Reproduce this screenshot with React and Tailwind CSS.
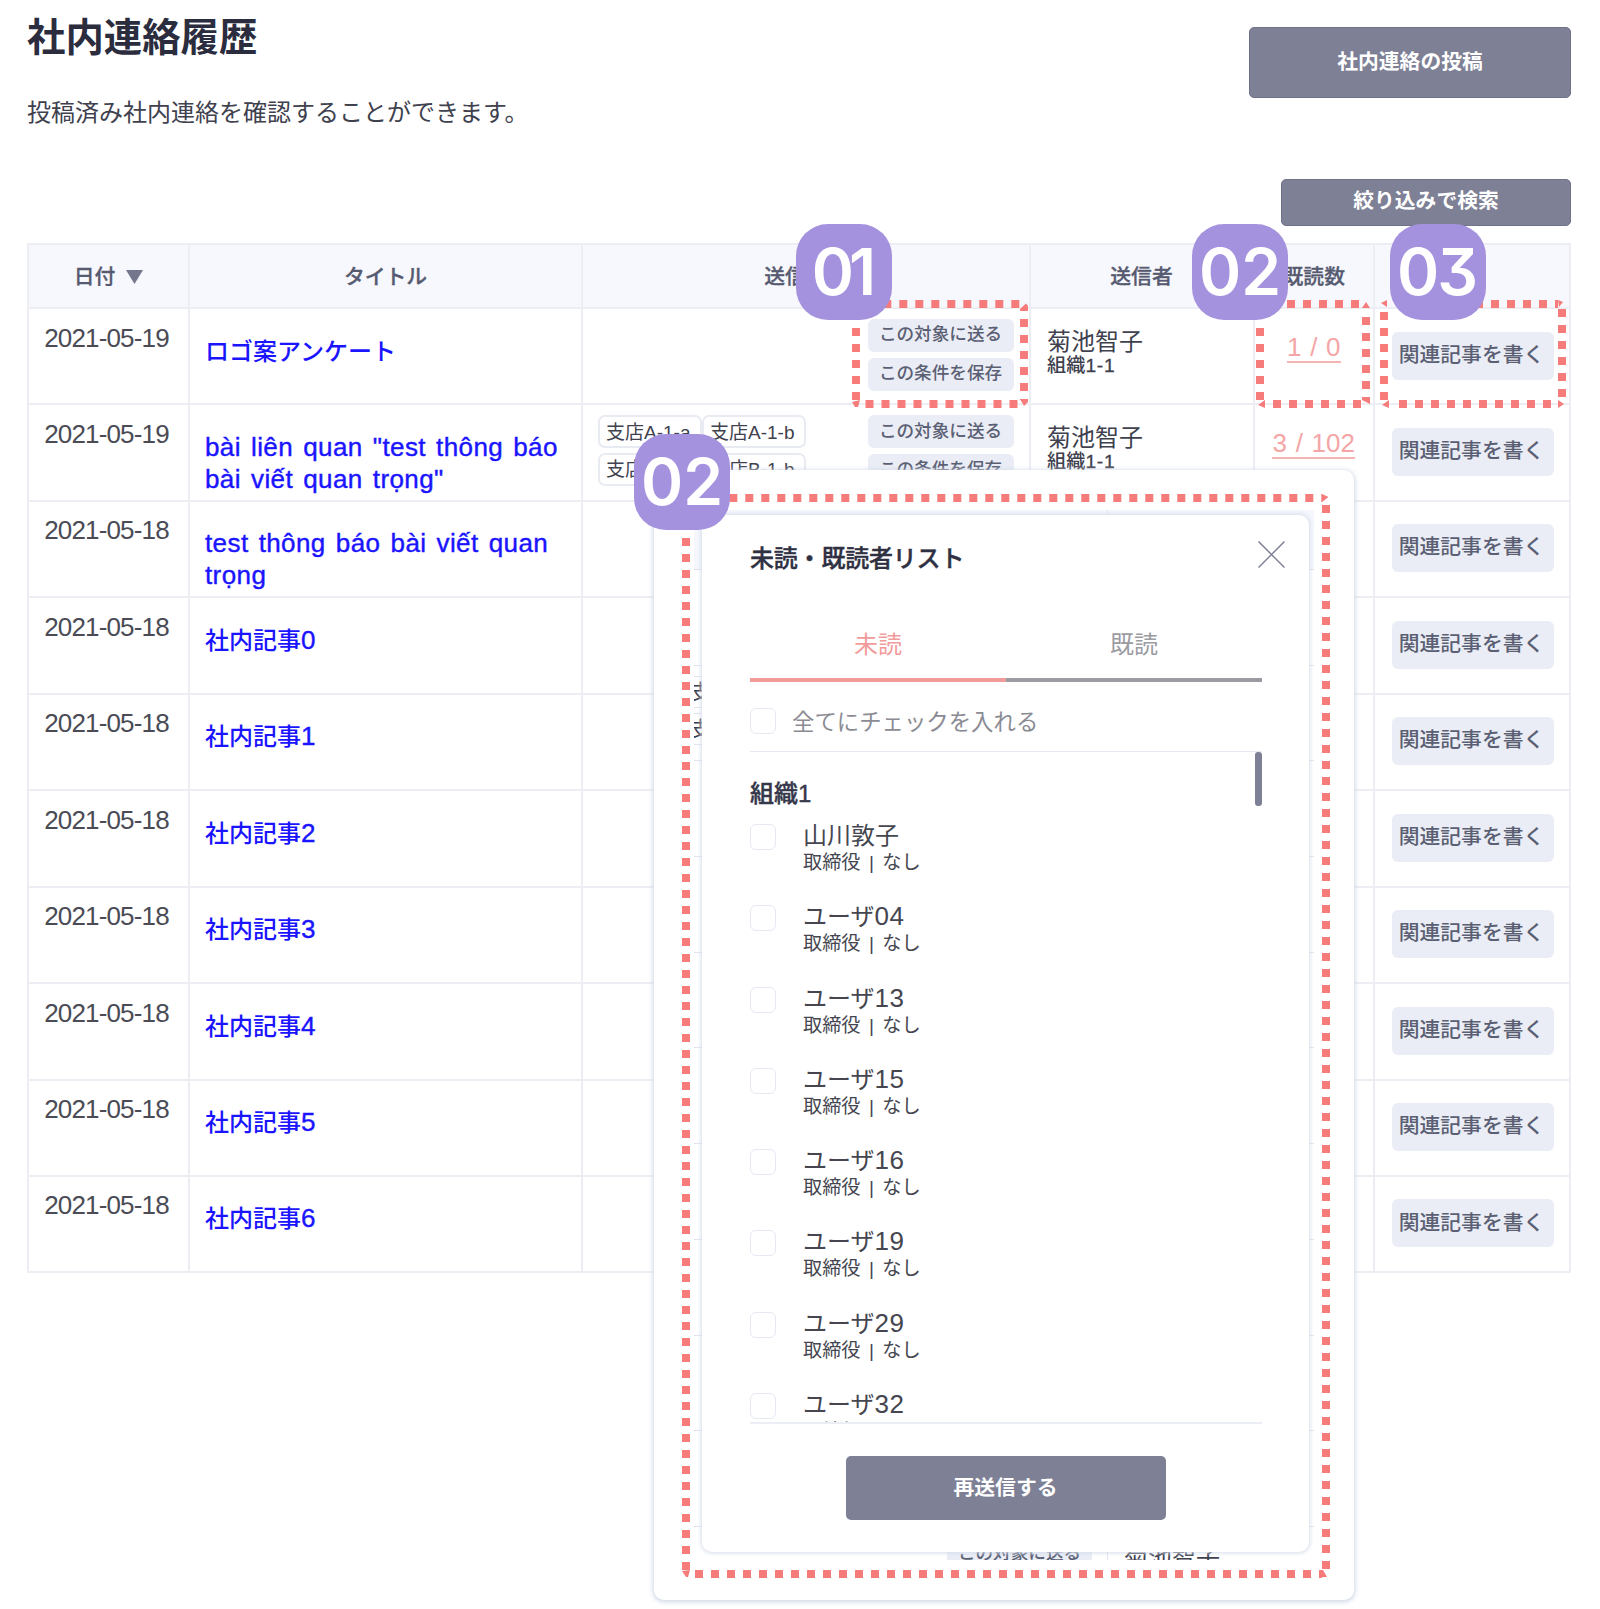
import React from "react";

const FONT = "font-['Liberation_Sans','Noto_Sans_CJK_JP',sans-serif]";
const COLS = "grid grid-cols-[161px_393px_447.5px_224px_120.5px_196px]";
const CORAL = "#f67b7b";

const rows = [
  { date: "2021-05-19", title: "ロゴ案アンケート", sender: true, read: "1 / 0" },
  {
    date: "2021-05-19",
    title: 'bài liên quan "test thông báo bài viết quan trọng"',
    sender: true,
    read: "3 / 102",
    tags: ["支店A-1-a", "支店A-1-b", "支店B-1-a", "支店B-1-b"],
  },
  { date: "2021-05-18", title: "test thông báo bài viết quan trọng" },
  { date: "2021-05-18", title: "社内記事0" },
  { date: "2021-05-18", title: "社内記事1" },
  { date: "2021-05-18", title: "社内記事2" },
  { date: "2021-05-18", title: "社内記事3" },
  { date: "2021-05-18", title: "社内記事4" },
  { date: "2021-05-18", title: "社内記事5" },
  { date: "2021-05-18", title: "社内記事6" },
];

const users = ["山川敦子", "ユーザ04", "ユーザ13", "ユーザ15", "ユーザ16", "ユーザ19", "ユーザ29", "ユーザ32"];

/* Sets the Latin and digit runs slightly larger than the Japanese ones. */
function Mixed({ text, className = "" }) {
  return text
    .split(/([^\u3000-\u9fff]+)/)
    .filter(Boolean)
    .map((part, i) =>
      /[\u3000-\u9fff]/.test(part) ? part : (
        <span key={i} className={`text-[26px] leading-none tracking-[0.4px] ${className}`}>
          {part}
        </span>
      )
    );
}

function Head({ children }) {
  return (
    <div className="flex items-center justify-center border-r-2 border-b-2 border-[#eceef4] bg-[#f7f8fd] pt-[1px] text-[20.8px] font-medium text-[#565a70] [-webkit-text-stroke:0.3px]">
      {children}
    </div>
  );
}

function Cell({ className = "", children }) {
  return <div className={`min-w-0 overflow-hidden border-r-2 border-b-2 border-[#eceef4] ${className}`}>{children}</div>;
}

function SmallButton({ children }) {
  return (
    <div className="flex h-[33px] w-[146px] items-center justify-center rounded-[6px] bg-[#eaedf5] pb-[1px] text-[17.6px] leading-none font-medium text-[#5b5f74]">
      {children}
    </div>
  );
}

function Row({ row }) {
  return (
    <div className={`${COLS} h-[96.45px]`}>
      <Cell className="pt-[12.5px] pr-[4px] text-center text-[26px] leading-[32px] tracking-[-0.85px] text-[#4a4b55]">{row.date}</Cell>
      <Cell className="pt-[26.5px] pr-[6px] pl-[15px] text-[24px] leading-[32px] font-medium text-[#1a14ff] [word-spacing:2.5px]">
        <Mixed text={row.title} className="[-webkit-text-stroke:0.4px]" />
      </Cell>
      <Cell className="flex justify-between pt-[10px] pr-[15px] pl-[15px]">
        {row.sender && (
          <>
            <div className="grid h-[70px] grid-cols-[104px_104px] grid-rows-[33px_33px] gap-y-[4.5px]">
              {(row.tags || []).map((t) => (
                <div
                  key={t}
                  className="flex items-center rounded-[7px] border-2 border-[#e9ebf2] pt-[1px] pl-[6px] text-[19px] leading-none whitespace-nowrap text-[#40414e]"
                >
                  {t}
                </div>
              ))}
            </div>
            <div className="flex flex-col gap-[5.5px]">
              <SmallButton>この対象に送る</SmallButton>
              <SmallButton>この条件を保存</SmallButton>
            </div>
          </>
        )}
      </Cell>
      <Cell className="pt-[19px] pl-[16.5px] text-[#40414e]">
        {row.sender && (
          <>
            <div className="text-[24px] leading-[28px]">菊池智子</div>
            <div className="text-[19.2px] leading-[20px] font-medium">
              組織<span className="tracking-[0.8px] [-webkit-text-stroke:0.3px]">1-1</span>
            </div>
          </>
        )}
      </Cell>
      <Cell className="pt-[22.5px] text-center text-[26px] leading-[30px] text-[#f4a6a6] [word-spacing:1.5px]">
        {row.read && <span className="inline-block h-[31px] border-b-2 border-[#f6b4b4]">{row.read}</span>}
      </Cell>
      <Cell className="pt-[22.5px] pl-[16.5px]">
        <div className="flex h-[48px] w-[162px] items-center justify-center rounded-[6px] bg-[#eaedf5] pr-[2px] pb-[1px] text-[20.8px] leading-none font-medium text-[#5b5f74]">
          関連記事を書く
        </div>
      </Cell>
    </div>
  );
}

function Badge({ className, children }) {
  return (
    <div
      className={`absolute flex h-[96px] w-[96px] items-center justify-center rounded-[32px] bg-[#a592df] pb-[1px] font-['Inter',sans-serif] text-[64px] leading-none font-semibold text-white [font-feature-settings:'cv09'] ${className}`}
    >
      {children}
    </div>
  );
}

/* Dashed callout: one dashed stroke per side, with a phase for each, and tapered corner pieces. */
function Callout({ l, t, r, b, top, right, bottom, left, corners }) {
  const s = { stroke: CORAL, strokeWidth: 8, strokeDasharray: "8 8" };
  return (
    <g>
      <line x1={top} y1={t + 4} x2={r - 8} y2={t + 4} {...s} />
      <line x1={r - 4} y1={right} x2={r - 4} y2={b - 8} {...s} />
      <line x1={bottom} y1={b - 4} x2={r - 8} y2={b - 4} {...s} />
      <line x1={l + 4} y1={left} x2={l + 4} y2={b - 8} {...s} />
      {corners.map((p) => (
        <polygon key={p} points={p} fill={CORAL} />
      ))}
    </g>
  );
}

function Checkbox() {
  return <div className="h-[26px] w-[26px] shrink-0 rounded-[6px] border-[1.5px] border-[#e6e8f2] bg-white" />;
}

function Modal() {
  return (
    <div className="absolute top-[470px] left-[654px] h-[1130px] w-[700px] rounded-[10px] bg-white shadow-[0_1px_5px_1px_#cfd8e6]">
      <div className="absolute top-[40px] left-[40px] h-[1050px] w-[620px] overflow-hidden bg-white">
        <div className="h-[60px] border-b border-[#dfe4ef] bg-[#f5f7fd]" />
        {Array.from({ length: 10 }, (_, i) => (
          <div key={i} className="h-[95.7px] border-b border-[#dfe4ef]" />
        ))}
        <div className="absolute top-[166px] left-[-8px] h-[32px] w-[40px] border-y border-[#dfe4ef] pl-[4px] text-[21px] leading-[30px] text-[#35374a]">支</div>
        <div className="absolute top-[203px] left-[-8px] h-[32px] w-[40px] border-y border-[#dfe4ef] pl-[4px] text-[21px] leading-[30px] text-[#35374a]">支</div>
        <div className="absolute top-0 left-[413px] h-full w-px bg-[#dfe4ef]" />
        <div className="absolute top-[1025px] left-[253px] h-[36px] w-[145px] bg-[#eaedf5] text-center text-[17.6px] leading-[37px] font-medium text-[#5b5f74]">
          この対象に送る
        </div>
        <div className="absolute top-[1033px] left-[430px] text-[24px] leading-[30px] text-[#40414e]">菊池智子</div>
      </div>

      <div className="absolute top-[45px] left-[48px] flex h-[1037px] w-[607px] flex-col rounded-[10px] bg-white px-[48px] shadow-[0_0_4px_1px_#d5dcea]">
        <div className="flex h-[114px] items-start justify-between pt-[26px]">
          <h2 className="pt-[2px] text-[24px] leading-[32px] font-medium tracking-[-0.2px] text-[#2f3142] [-webkit-text-stroke:0.4px]">
            未読・既読者リスト
          </h2>
          <svg className="mr-[-23.5px] h-[27px] w-[27px]" viewBox="0 0 27 27" stroke="#7e8096" strokeWidth="1.5">
            <path d="M0.5 0.5 26.5 26.5M26.5 0.5 0.5 26.5" />
          </svg>
        </div>
        <div className="grid w-[512px] shrink-0 grid-cols-2 text-center text-[24px] leading-[32px]">
          <div className="h-[53px] border-b-4 border-[#f29b9b] text-[#f29b9b]">未読</div>
          <div className="h-[53px] border-b-4 border-[#9b9ba2] text-[#9b9ba2]">既読</div>
        </div>
        <div className="flex h-[70px] w-[512px] shrink-0 items-center gap-[16px] border-b-[1.5px] border-[#e6e8f2] pt-[8px] text-[22.4px] leading-none text-[#8a8b93]">
          <Checkbox />
          <span className="pt-[6px]">全てにチェックを入れる</span>
        </div>
        <div className="relative h-[672px] w-[512px] shrink-0 overflow-hidden border-b-2 border-[#eceef5]">
          <div className="h-[67px] pt-[26px] text-[24px] leading-[32px] font-medium text-[#35374a] [-webkit-text-stroke:0.4px]">組織1</div>
          {users.map((u) => (
            <div key={u} className="flex h-[81.25px] gap-[27px] pt-[5px]">
              <Checkbox />
              <div className="mt-[-4px] text-[#45464f]">
                <div className="h-[32px] text-[24px] leading-[32px]">
                  <Mixed text={u} />
                </div>
                <div className="text-[19.2px] leading-[21px] [word-spacing:3px]">取締役 | なし</div>
              </div>
            </div>
          ))}
          <div className="absolute top-0 right-0 h-[54px] w-[7px] rounded-[3px] bg-[#7e8096]" />
        </div>
        <div className="mt-[32px] flex h-[64px] w-[320px] items-center justify-center self-center rounded-[5px] bg-[#7e8096] pb-[1px] text-[20.8px] font-bold text-white">
          再送信する
        </div>
      </div>
    </div>
  );
}

export default function App() {
  return (
    <div className={`relative h-[1609px] w-[1600px] overflow-hidden bg-white ${FONT}`}>
      <header className="flex h-[178px] justify-between pr-[29px] pl-[27px]">
        <div>
          <h1 className="pt-[14px] text-[38.4px] leading-[48px] font-bold text-[#2b2d3e]">社内連絡履歴</h1>
          <p className="pt-[35px] text-[24px] leading-[32px] text-[#40414e]">投稿済み社内連絡を確認することができます。</p>
        </div>
        <div className="mt-[27px] flex h-[71px] w-[322px] items-center justify-center rounded-[5px] border border-[#6f7289] bg-[#7e8096] pb-[1px] text-[20.8px] font-bold text-white">
          社内連絡の投稿
        </div>
      </header>
      <div className="flex h-[65px] justify-end pt-[1px] pr-[29px]">
        <div className="flex h-[47px] w-[290px] items-center justify-center rounded-[5px] border border-[#6f7289] bg-[#7e8096] pb-[3px] text-[20.8px] font-bold text-white">
          絞り込みで検索
        </div>
      </div>

      <main className="ml-[27px] w-[1544px] border-t-2 border-l-2 border-[#eceef4]">
        <div className={`${COLS} h-[64px]`}>
          <Head>
            <span>日付</span>
            <svg className="ml-[11px] h-[14px] w-[17px]" viewBox="0 0 17 14" fill="#73768c">
              <path d="M0 0H17L8.500 14Z" />
            </svg>
          </Head>
          <Head>タイトル</Head>
          <Head>送信対象</Head>
          <Head>送信者</Head>
          <Head>既読数</Head>
          <Head />
        </div>
        {rows.map((row, i) => (
          <Row key={i} row={row} />
        ))}
      </main>

      <Modal />

      <svg className="absolute inset-0 h-[1609px] w-[1600px]" viewBox="0 0 1600 1609">
        <Callout l={852} t={300} r={1028} b={408} top={883.3} right={319} bottom={865.5} left={328}
          corners={["1020,309 1026,303.500 1028,306 1028,311 1020,311", "1020,399 1028,399 1028,402 1024,406", "852,402 860,400 858,407 855,407"]} />
        <Callout l={1256} t={300} r={1370} b={408} top={1287} right={317} bottom={1273} left={328}
          corners={["1362,308 1366,302 1370,308", "1362,400 1370,400 1370,404", "1258,405 1265,400 1265,408"]} />
        <Callout l={1380} t={300} r={1566} b={408} top={1475} right={309} bottom={1399} left={312}
          corners={["1381,303 1387,300 1387,307", "1558,300 1563,302 1559,307", "1382,405 1389,400 1389,408", "1558,400 1564,404 1558,408"]} />
        <Callout l={682} t={494} r={1330} b={1578} top={729.3} right={505} bottom={695} left={538}
          corners={["1322,494 1328.500,497 1322,502", "1320,1570 1323,1570 1327,1577 1321,1577", "682,1571 690,1570 688,1577 686,1577"]} />
      </svg>

      <Badge className="top-[224px] left-[796px] pr-[5px] tracking-[-5px]">01</Badge>
      <Badge className="top-[224px] left-[1192px]">02</Badge>
      <Badge className="top-[224px] left-[1390px] pr-[3px] tracking-[-2px]">03</Badge>
      <Badge className="top-[434px] left-[634px]">02</Badge>
    </div>
  );
}
